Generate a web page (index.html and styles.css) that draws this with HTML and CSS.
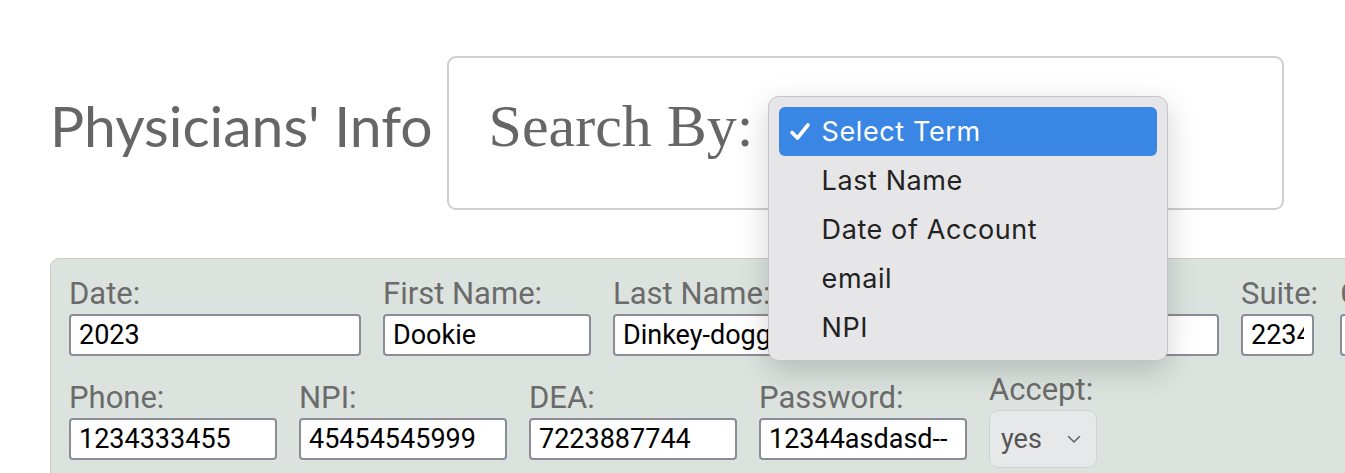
FILE: index.html
```html
<!DOCTYPE html>
<html lang="en">
<head>
  <meta charset="UTF-8">
  <meta name="viewport" content="width=device-width, initial-scale=1.0">
  <title>Physicians' Info</title>
  <link rel="stylesheet" href="styles.css">
</head>
<body>
  <main class="page">
    <header class="top">
      <h1>Physicians' Info</h1>
      <div class="search-box">
        <label for="term">Search By:</label>
        <select id="term" class="term-select">
          <option>Select Term</option>
          <option>Last Name</option>
          <option>Date of Account</option>
          <option>email</option>
          <option>NPI</option>
        </select>
        <!-- the open menu of the select -->
        <ul class="menu">
          <li class="selected">
            <svg class="check" width="22" height="20" viewBox="0 0 22 20"><path d="M3 10.5 L8.5 16 L19 3" fill="none" stroke="#fff" stroke-width="3.6" stroke-linecap="round" stroke-linejoin="round"/></svg>
            Select Term
          </li>
          <li>Last Name</li>
          <li>Date of Account</li>
          <li>email</li>
          <li>NPI</li>
        </ul>
      </div>
    </header>

    <form class="panel">
      <div class="row">
        <div class="field"><label for="date">Date:</label><input id="date" class="w-date" value="2023"></div>
        <div class="field"><label for="first">First Name:</label><input id="first" value="Dookie"></div>
        <div class="field"><label for="last">Last Name:</label><input id="last" value="Dinkey-doggo"></div>
        <div class="field"><label for="email">Email:</label><input id="email" class="w-email" value=""></div>
        <div class="field"><label for="suite">Suite:</label><input id="suite" class="w-suite" value="2234"></div>
        <div class="field"><label for="city">City:</label><input id="city" value=""></div>
      </div>
      <div class="row">
        <div class="field"><label for="phone">Phone:</label><input id="phone" value="1234333455"></div>
        <div class="field"><label for="npi">NPI:</label><input id="npi" value="45454545999"></div>
        <div class="field"><label for="dea">DEA:</label><input id="dea" value="7223887744"></div>
        <div class="field"><label for="pass">Password:</label><input id="pass" value="12344asdasd--"></div>
        <div class="field">
          <label for="accept">Accept:</label>
          <span class="select-wrap">
            <select id="accept" class="accept">
              <option>yes</option>
              <option>no</option>
            </select>
            <svg class="chevron" width="14" height="9" viewBox="0 0 14 9"><path d="M1.5 1.5 L7 7 L12.5 1.5" fill="none" stroke="#666" stroke-width="1.6" stroke-linecap="round" stroke-linejoin="round"/></svg>
          </span>
        </div>
      </div>
    </form>
  </main>
</body>
</html>
```

FILE: styles.css
```css
html, body {
  margin: 0;
  padding: 0;
  background: #fff;
  overflow: hidden;
}
.page {
  padding: 56px 0 0 50px;
}
.top {
  display: flex;
  align-items: center;
  gap: 14px;
}
.top h1 {
  margin: -16px 0 0 0;
  font-family: Lato, "Open Sans", sans-serif;
  font-weight: normal;
  font-size: 57px;
  color: #666;
}
.search-box {
  position: relative;
  box-sizing: border-box;
  width: 837px;
  height: 154px;
  border: 2px solid #cfcfcf;
  border-radius: 9px;
  display: flex;
  align-items: center;
  padding-left: 40px;
}
.search-box label {
  font-family: "Liberation Serif", "Times New Roman", serif;
  font-size: 60px;
  color: #666;
  margin-top: -14px;
}
.term-select {
  margin-left: 30px;
  font-size: 24px;
}
.menu {
  position: absolute;
  left: 319px;
  top: 38px;
  width: 400px;
  height: 265px;
  box-sizing: border-box;
  margin: 0;
  padding: 10px;
  list-style: none;
  background: #e6e6e8;
  border: 1px solid #c4c4c6;
  border-radius: 11px;
  box-shadow: 0 10px 30px rgba(0, 0, 0, 0.18);
  font-family: Inter, "Liberation Sans", Arial, sans-serif;
  font-size: 27px;
  letter-spacing: 0.6px;
  color: #222;
}
.menu li {
  position: relative;
  height: 49px;
  line-height: 49px;
  padding-left: 43px;
  border-radius: 6px;
}
.menu li.selected {
  background: #3a86e4;
  color: #fff;
}
.menu .check {
  position: absolute;
  left: 10px;
  top: 15px;
}
.panel {
  margin: 48px -30px 0 0;
  padding: 17px 18px 20px;
  background: #dce3df;
  border: 1px solid #c9cdca;
  border-radius: 9px 0 0 0;
  overflow: hidden;
  font-family: Roboto, "Liberation Sans", sans-serif;
}
.row {
  display: flex;
  flex-wrap: nowrap;
  align-items: last baseline;
  gap: 22px;
  margin-bottom: 16px;
}
.field {
  display: flex;
  flex-direction: column;
  flex-shrink: 0;
}
.field label {
  font-size: 31px;
  line-height: 36px;
  color: #6b6b6b;
  margin-bottom: 2px;
}
.field input {
  width: 208px;
  height: 42px;
  box-sizing: border-box;
  border: 2px solid #8c8c98;
  border-radius: 4px;
  padding: 0 8px;
  font-family: Roboto, "Liberation Sans", sans-serif;
  font-size: 27px;
  color: #000;
  background: #fff;
}
.field input.w-date {
  width: 292px;
}
.field input.w-email {
  width: 376px;
}
.field input.w-suite {
  width: 73px;
}
.select-wrap {
  position: relative;
  display: inline-block;
  width: 108px;
}
.accept {
  -webkit-appearance: none;
  appearance: none;
  width: 108px;
  height: 58px;
  border: 1px solid #cfd2d4;
  border-radius: 9px;
  background: #e7e8ea;
  padding: 0 11px;
  font-family: Roboto, "Liberation Sans", sans-serif;
  font-size: 27px;
  color: #555;
}
.chevron {
  position: absolute;
  right: 16px;
  top: 25px;
  pointer-events: none;
}
```
